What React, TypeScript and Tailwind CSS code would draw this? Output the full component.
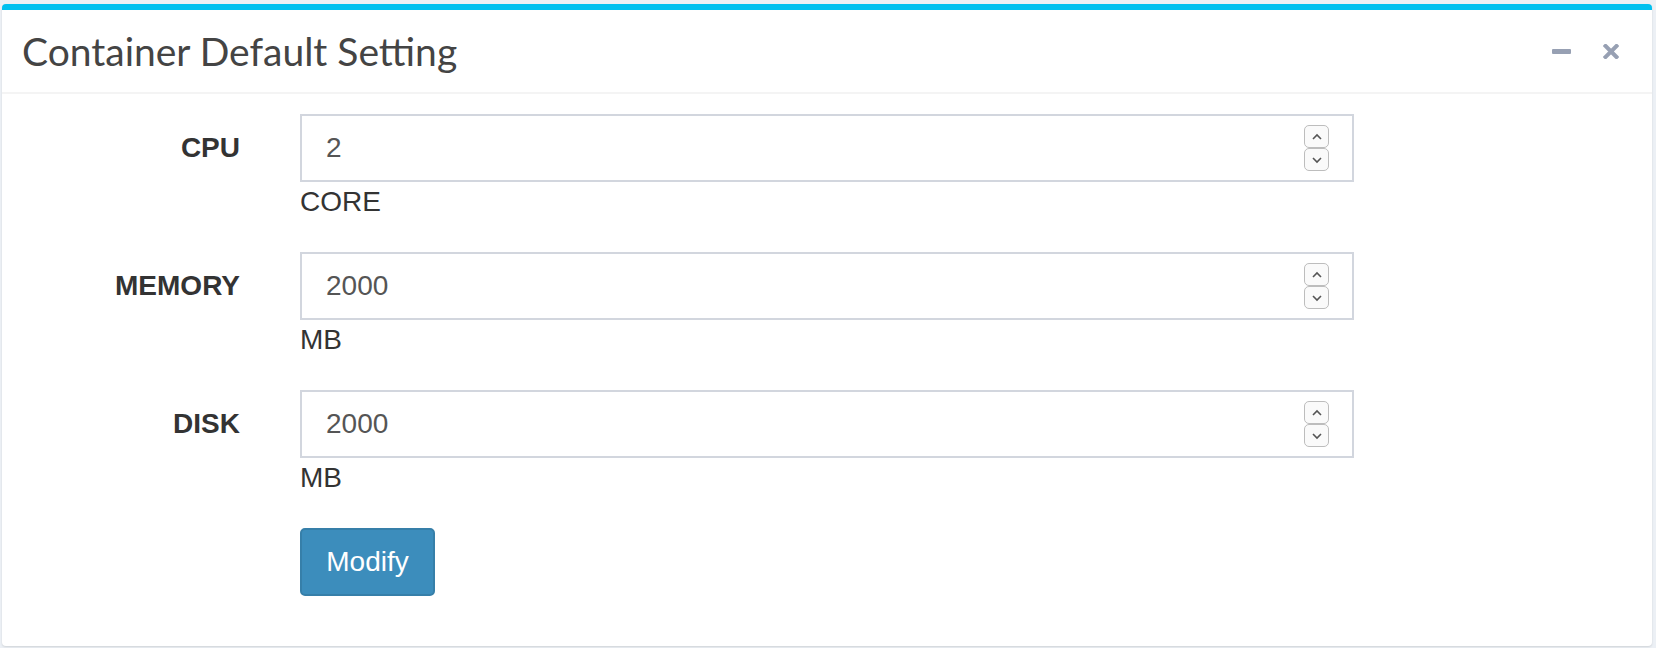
import React from "react";

const FIELDS = [
  { label: "CPU", value: "2", unit: "CORE" },
  { label: "MEMORY", value: "2000", unit: "MB" },
  { label: "DISK", value: "2000", unit: "MB" },
];

function Spinner() {
  return (
    <div className="flex flex-col">
      <div className="w-[25px] h-[23px] rounded-[5px] border border-[#bdbdbd] bg-[#fafafa] flex items-center justify-center">
        <svg width="12" height="8" viewBox="0 0 12 8">
          <path d="M2 6 L6 2 L10 6" fill="none" stroke="#555" strokeWidth="1.6" />
        </svg>
      </div>
      <div className="w-[25px] h-[23px] rounded-[5px] border border-[#bdbdbd] bg-[#fafafa] flex items-center justify-center">
        <svg width="12" height="8" viewBox="0 0 12 8">
          <path d="M2 2 L6 6 L10 2" fill="none" stroke="#555" strokeWidth="1.6" />
        </svg>
      </div>
    </div>
  );
}

function Field({ label, value, unit }: { label: string; value: string; unit: string }) {
  return (
    <div className="flex">
      <div className="w-[278px] pr-[60px] pt-[14px] text-right text-[28px] leading-[40px] font-bold text-[#333]">
        {label}
      </div>
      <div className="w-[1054px]">
        <div className="h-[68px] border-2 border-[#d2d6de] pl-[24px] pr-[23px] flex items-center justify-between text-[28px] text-[#555]">
          <span>{value}</span>
          <Spinner />
        </div>
        <div className="text-[28px] leading-[40px] text-[#333]">{unit}</div>
      </div>
    </div>
  );
}

export default function App() {
  return (
    <div className="min-h-[648px] bg-[#ecf0f5] pt-[4px] pl-[2px] pr-[4px] font-['Liberation_Sans',Arial,sans-serif]">
      <div className="bg-white rounded-[4px] border-t-[6px] border-[#00c0ef] shadow-[0_1px_2px_rgba(0,0,0,0.12)]">
        <div className="flex items-center justify-between px-[20px] py-[21px] border-b-2 border-[#f4f4f4]">
          <h3 className="font-['Lato',sans-serif] text-[39px] leading-[40px] text-[#444]">
            Container Default Setting
          </h3>
          <div className="flex items-center gap-[32px] pr-[13px]">
            <svg width="19" height="5" viewBox="0 0 19 5">
              <rect width="19" height="5" rx="1" fill="#97a0b3" />
            </svg>
            <svg width="16" height="15" viewBox="0 0 16 15">
              <path d="M2.5 2 L13.5 13 M13.5 2 L2.5 13" stroke="#97a0b3" strokeWidth="4" strokeLinecap="square" />
            </svg>
          </div>
        </div>
        <div className="p-[20px] flex flex-col gap-[30px]">
          {FIELDS.map((f) => (
            <Field key={f.label} {...f} />
          ))}
          <div className="pl-[278px] pb-[30px]">
            <button className="h-[68px] w-[135px] bg-[#3c8dbc] border-2 border-[#367fa9] rounded-[5px] text-white text-[28px]">
              Modify
            </button>
          </div>
        </div>
      </div>
    </div>
  );
}
